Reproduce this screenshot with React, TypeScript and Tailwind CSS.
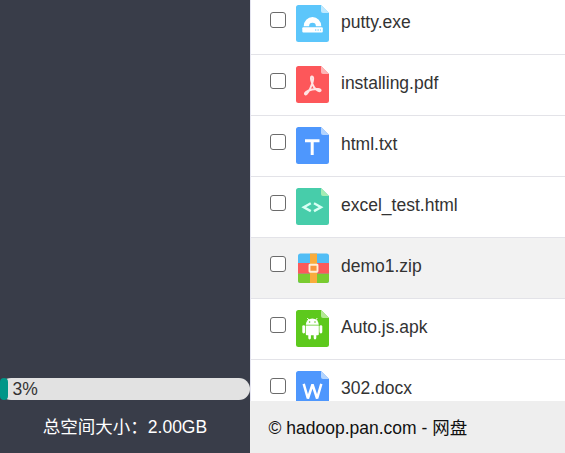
import React from "react";

type Kind = "exe" | "pdf" | "txt" | "html" | "zip" | "apk" | "docx";

const files: { name: string; kind: Kind; active?: boolean }[] = [
  { name: "putty.exe", kind: "exe" },
  { name: "installing.pdf", kind: "pdf" },
  { name: "html.txt", kind: "txt" },
  { name: "excel_test.html", kind: "html" },
  { name: "demo1.zip", kind: "zip", active: true },
  { name: "Auto.js.apk", kind: "apk" },
  { name: "302.docx", kind: "docx" },
];

const colors: Record<Kind, [string, string]> = {
  exe: ["#5cc6fb", "#c0e9fe"],
  pdf: ["#fd575a", "#fdb5b6"],
  txt: ["#4e97fd", "#b3d4fe"],
  html: ["#47cdaa", "#a4ecb4"],
  zip: ["#fff", "#fff"],
  apk: ["#5dc91d", "#b4e895"],
  docx: ["#4e97fd", "#b3d4fe"],
};

function Glyph({ kind }: { kind: Kind }) {
  switch (kind) {
    case "exe":
      return (
        <g>
          <path d="M7.7 21.2a8.800 9.200 0 0 1 17.600 0h-5.400a3.400 3.400 0 0 0-6.800 0z" fill="#fff" />
          <rect x="6.300" y="22.300" width="20.500" height="5.300" rx="1" fill="#fff" />
          <path d="M19 25h1.300M21.500 25h1.300M24 25h1" stroke="#5cc6fb" strokeWidth="1.200" />
        </g>
      );
    case "pdf":
      return (
        <path
          d="M15.600 10.500c2.600-.2 1.300 4.600.6 7-1.400 3.800-4.200 11-6.600 11-2.200-.9 1.300-4.200 6.600-5.100 4.200-.8 9-.6 8.400 1.300-.7 1.600-4.500-.6-6.300-3-2.200-3-4.500-10.900-2.700-11.200z"
          fill="none"
          stroke="#ffe4e4"
          strokeWidth="2"
        />
      );
    case "txt":
      return <path d="M9 13.800h14.500M16.200 13.800V28" stroke="#fff" strokeWidth="3" fill="none" />;
    case "html":
      return (
        <path
          d="M14.800 15.300 7.800 19.200l7 3.900M18 15.300l7 3.900-7 3.900"
          stroke="#d8fff4"
          strokeWidth="2.400"
          fill="none"
        />
      );
    case "apk":
      return (
        <g fill="#fff">
          <path d="M9.800 14.700a6.500 6.200 0 0 1 13 0z" />
          <path d="m11.300 8 2 2.500M21.300 8l-2 2.500" stroke="#fff" />
          <path d="M9.800 15.400h13v8.900q0 1-1 1h-1.500v2.800a1.300 1.300 0 0 1-2.600 0v-2.800h-2.800v2.800a1.300 1.300 0 0 1-2.600 0v-2.800h-1.500q-1 0-1-1z" />
          <rect x="6.300" y="15.200" width="2.800" height="8.200" rx="1.400" />
          <rect x="23.500" y="15.200" width="2.800" height="8.200" rx="1.400" />
          <circle cx="13.600" cy="12" r=".8" fill="#5dc91d" />
          <circle cx="19" cy="12" r=".8" fill="#5dc91d" />
        </g>
      );
    case "docx":
      return (
        <path
          d="m7.700 12.800 4.200 14.700 4.600-14 4.600 14 4.200-14.700"
          stroke="#fff"
          strokeWidth="2.500"
          fill="none"
          strokeLinejoin="bevel"
        />
      );
    default:
      return null;
  }
}

function FileIcon({ kind }: { kind: Kind }) {
  if (kind === "zip") {
    return (
      <svg viewBox="0 0 33 37" className="h-[37px] w-[33px] shrink-0">
        <rect x="2" y="4.500" width="31" height="29.500" rx="2.500" fill="#51bdf5" />
        <path d="M2 24.500h31v7a2.500 2.500 0 0 1-2.500 2.500h-26A2.500 2.500 0 0 1 2 31.500z" fill="#7acb30" />
        <rect x="2" y="14" width="31" height="10.600" fill="#fb5a5a" />
        <rect x="14" y="4.500" width="7" height="29.500" fill="#f9ac3c" />
        <rect x="13.500" y="15.700" width="8" height="7" rx=".5" fill="#f9963c" stroke="#fff0d8" strokeWidth="1.900" />
      </svg>
    );
  }
  const [base, fold] = colors[kind];
  return (
    <svg viewBox="0 0 33 37" className="h-[37px] w-[33px] shrink-0">
      <path d="M2.500 0H25l8 8v26.500a2.500 2.500 0 0 1-2.500 2.500h-28A2.500 2.500 0 0 1 0 34.500v-32A2.500 2.500 0 0 1 2.500 0z" fill={base} />
      <path d="M25 0l8 8h-6a2 2 0 0 1-2-2z" fill={fold} />
      <Glyph kind={kind} />
    </svg>
  );
}

export default function App() {
  return (
    <div className="flex h-[453px] w-[565px] overflow-hidden bg-white font-['Liberation_Sans','Noto_Sans_CJK_SC',sans-serif] text-[17.5px] leading-[22px]">
      <aside className="flex w-[250px] shrink-0 flex-col justify-end bg-[#393d49] text-white">
        <div className="flex h-[22px] rounded-full bg-[#e2e2e2]">
          <div className="h-full w-[7.5px] shrink-0 rounded-full bg-[#009688]" />
          <span className="pl-[5px] text-[#333]">3%</span>
        </div>
        <div className="flex h-[53px] items-center justify-center whitespace-nowrap pt-px">总空间大小：2.00GB</div>
      </aside>
      <main className="flex min-w-0 flex-1 flex-col">
        <div className="h-[401px] overflow-hidden border-l border-[#e4e4f0]">
          <ul className="-mt-[6px]">
            {files.map((f) => (
              <li
                key={f.name}
                className={`flex h-[61px] items-start border-b border-[#e3e3e8] pl-[19px] pt-[11px] ${f.active ? "bg-[#f2f2f2]" : "bg-white"}`}
              >
                <input
                  type="checkbox"
                  aria-label={f.name}
                  className="mr-[10px] mt-[7px] size-4 shrink-0 appearance-none rounded-[3px] border border-[#6b6b6b] bg-white"
                />
                <FileIcon kind={f.kind} />
                <span className="ml-3 mt-[6px] text-[#333]">{f.name}</span>
              </li>
            ))}
          </ul>
        </div>
        <footer className="flex flex-1 items-center bg-[#eee] pl-[18.5px] pt-px text-[#111]">© hadoop.pan.com - 网盘</footer>
      </main>
    </div>
  );
}
